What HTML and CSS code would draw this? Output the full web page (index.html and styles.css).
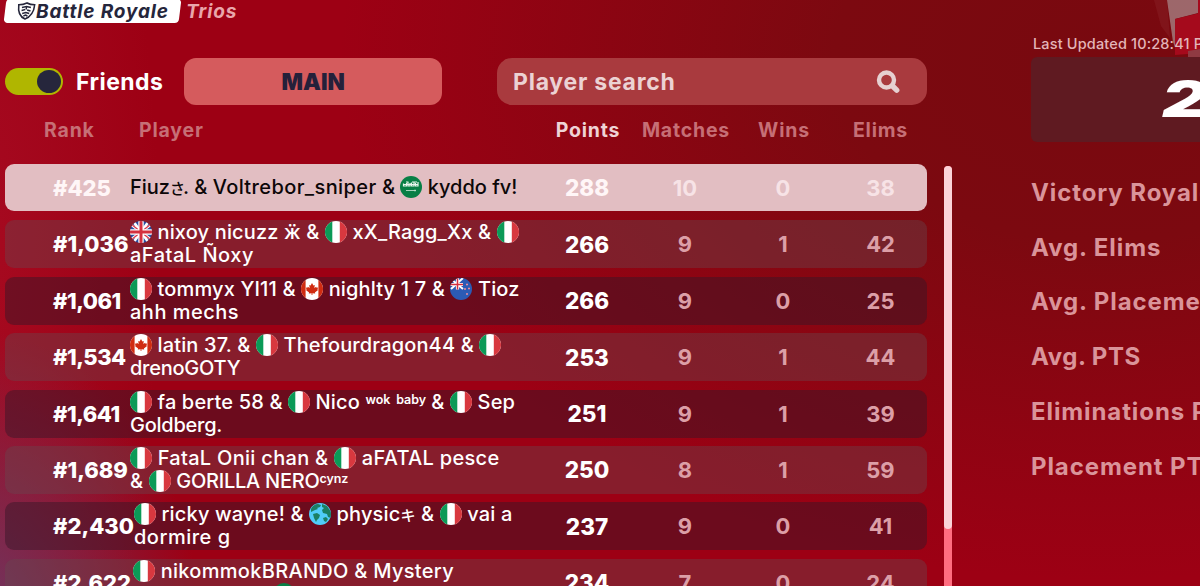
FILE: index.html
```
<!DOCTYPE html>
<html lang="en">
<head>
    <meta charset="UTF-8">
    <meta name="viewport" content="width=device-width, initial-scale=1.0">
    <title>Leaderboard</title>
    <link rel="stylesheet" href="styles.css">
</head>
<body>
    <!-- Flag shapes used in the player names -->
    <svg class="defs" width="0" height="0">
        <clipPath id="round"><circle cx="11" cy="11" r="11"/></clipPath>
        <symbol id="it" viewBox="0 0 22 22">
            <g clip-path="url(#round)">
                <rect width="22" height="22" fill="#fff"/>
                <rect width="7.3" height="22" fill="#0b9a57"/>
                <rect x="14.8" width="7.2" height="22" fill="#d8383f"/>
            </g>
        </symbol>
        <symbol id="gb" viewBox="0 0 22 22">
            <g clip-path="url(#round)">
                <rect width="22" height="22" fill="#2a4fa0"/>
                <path d="M0 3L22 19M22 3L0 19M3 0L19 22M19 0L3 22" stroke="#fff" stroke-width="2.6"/>
                <path d="M1 3L21 19M21 3L1 19" stroke="#d8384c" stroke-width="1.3"/>
                <path d="M11 0V22M0 11H22" stroke="#fff" stroke-width="5.4"/>
                <path d="M11 0V22M0 11H22" stroke="#d4303f" stroke-width="3"/>
            </g>
        </symbol>
        <symbol id="ca" viewBox="0 0 22 22">
            <g clip-path="url(#round)">
                <rect width="22" height="22" fill="#fff"/>
                <rect width="4.6" height="22" fill="#d02c12"/>
                <rect x="17.4" width="4.6" height="22" fill="#d02c12"/>
                <path d="M11 5l1.4 2.6 1.4-.7-.5 3.2 1.9-1.4.4 1 1.6-.2-.8 2 .7.6-3.2 2.4.3 1.1-2.8-.4V17h-.8v-1.8l-2.8.4.3-1.1-3.2-2.4.7-.6-.8-2 1.6.2.4-1 1.9 1.4-.5-3.2 1.4.7z" fill="#d02c12"/>
            </g>
        </symbol>
        <symbol id="sa" viewBox="0 0 22 22">
            <g clip-path="url(#round)">
                <rect width="22" height="22" fill="#087f45"/>
                <path d="M3.5 7.5v2.5h3V7M8 6v4h2V7M11.5 6.5V10h2.5V6M15.5 7v3h2.5V6M4 8.5h14M6 6h2.5M12 6h5" stroke="#e8f5ec" stroke-width="1.2" fill="none"/>
                <path d="M6 14.5h10M15 13.5v2" stroke="#cfe8d8" stroke-width=".8"/>
            </g>
        </symbol>
        <symbol id="nz" viewBox="0 0 22 22">
            <g clip-path="url(#round)">
                <rect width="22" height="22" fill="#2b5bb5"/>
                <path d="M1 1L13 11M13 0L1 11" stroke="#fff" stroke-width="2"/>
                <path d="M7.5 0V11.5M0 6.5H13" stroke="#fff" stroke-width="3.2"/>
                <path d="M7.5 0V11.5M0 6.5H13" stroke="#d4303f" stroke-width="1.5"/>
                <path d="M16 6.5h2M17 5.5v2M14 11h2M15 10v2M18 10.5h2M19 9.5v2M16 16h2M17 15v2" stroke="#e88ca0" stroke-width="1"/>
            </g>
        </symbol>
        <symbol id="globe" viewBox="0 0 22 22">
            <g clip-path="url(#round)">
                <rect width="22" height="22" fill="#50cdf8"/>
                <path d="M2 6c1-3 4-5 7-5l3 1-1 2-3 1 1 1-3 1-2 1-2 1zM13 1l5 2 4 6v6l-3-1-1-3-4-1-1-3 2-2-2-1zM4 11l4-1 3 2-1 3-2 2-1 2-2-4zM14 15l3-1 2 2-2 3-2-1z" fill="#1b7f63"/>
            </g>
        </symbol>
    </svg>

    <svg class="backdrop" viewBox="0 0 80 60">
        <path d="M34 0h13l3 38-9-12z" fill="#a04045" opacity=".2"/>
        <path d="M47 0h31v13l-23 6 2 33-4-10z" fill="#a9878a" opacity=".75"/>
        <path d="M55 19l25-6v40l-25 2z" fill="#a50a1c"/>
        <path d="M78 0h2v14l-2 1z" fill="#a50a1c"/>
        <path d="M68 51l12-2v9H68z" fill="#8f3a42"/>
    </svg>

    <div class="page">
        <div class="board">
            <div class="mode">
                <div class="mode-badge">
                    <svg class="shield" viewBox="0 0 18 18" fill="none" stroke="#25263b">
                        <path d="M9 1c2.5 1.3 5 1.8 8 1.8C17 9 15.5 14.5 9 17 2.5 14.5 1 9 1 2.8 4 2.8 6.5 2.3 9 1z" stroke-width="1.6"/>
                        <path d="M4.5 5.5L9 4.5l4.5 1M4.5 8.5L8 7.5M10 8l3.5 1M5.5 11.5L9 10.5l3.5 1M9 4.5v3M7 14l2-1 2 1" stroke-width="1.4"/>
                    </svg>
                    <span>Battle Royale</span>
                </div>
                <span class="mode-sub">Trios</span>
            </div>

            <div class="controls">
                <div class="toggle"><div class="knob"></div></div>
                <span class="friends">Friends</span>
                <button class="main-button">MAIN</button>
                <div class="search">
                    <span>Player search</span>
                    <svg class="search-icon" viewBox="0 0 24 24" fill="none" stroke="#e6d0d1">
                        <circle cx="10.5" cy="10" r="7.5" stroke-width="4.4"/>
                        <path d="M16.5 16l4.2 4.2" stroke-width="5.4" stroke-linecap="round"/>
                    </svg>
                </div>
            </div>

            <div class="head">
                <span class="head-rank">Rank</span>
                <span class="head-player">Player</span>
                <span class="stat head-points">Points</span>
                <span class="stat">Matches</span>
                <span class="stat">Wins</span>
                <span class="stat last">Elims</span>
            </div>

            <div class="rows">
                <div class="row active">
                    <span class="rank">#425</span>
                    <div class="player">Fiuz<small class="kana tight">さ</small>. &amp; <span class="loose">Voltrebor_sniper</span> &amp; <svg class="flag"><use href="#sa"/></svg> kyddo fv!</div>
                    <span class="stat points">288</span><span class="stat">10</span><span class="stat">0</span><span class="stat last">38</span>
                </div>
                <div class="row">
                    <span class="rank">#1,036</span>
                    <div class="player"><svg class="flag"><use href="#gb"/></svg> nixoy nicuzz ӝ &amp; <svg class="flag"><use href="#it"/></svg> xX_Ragg_Xx &amp; <svg class="flag"><use href="#it"/></svg><br><span class="loose">aFataL Ñoxy</span></div>
                    <span class="stat points">266</span><span class="stat">9</span><span class="stat">1</span><span class="stat last">42</span>
                </div>
                <div class="row dark">
                    <span class="rank narrow">#1,061</span>
                    <div class="player"><svg class="flag"><use href="#it"/></svg> tommyx YI11 &amp; <svg class="flag"><use href="#ca"/></svg> nighlty 1 7 &amp; <svg class="flag"><use href="#nz"/></svg> Tioz<br><span class="loose">ahh mechs</span></div>
                    <span class="stat points">266</span><span class="stat">9</span><span class="stat">0</span><span class="stat last">25</span>
                </div>
                <div class="row">
                    <span class="rank narrow">#1,534</span>
                    <div class="player"><svg class="flag"><use href="#ca"/></svg> latin 37. &amp; <svg class="flag"><use href="#it"/></svg> Thefourdragon44 &amp; <svg class="flag"><use href="#it"/></svg><br><span class="tight">drenoGOTY</span></div>
                    <span class="stat points">253</span><span class="stat">9</span><span class="stat">1</span><span class="stat last">44</span>
                </div>
                <div class="row dark">
                    <span class="rank narrow">#1,641</span>
                    <div class="player"><svg class="flag"><use href="#it"/></svg> fa berte 58 &amp; <svg class="flag"><use href="#it"/></svg> Nico <small class="sup">wok&nbsp; baby</small> &amp; <svg class="flag"><use href="#it"/></svg> Sep<br><span class="tight">Goldberg.</span></div>
                    <span class="stat points">251</span><span class="stat">9</span><span class="stat">1</span><span class="stat last">39</span>
                </div>
                <div class="row">
                    <span class="rank">#1,689</span>
                    <div class="player"><span class="medium"><svg class="flag"><use href="#it"/></svg> FataL Onii chan &amp; <svg class="flag"><use href="#it"/></svg> aFATAL pesce</span><br>&amp; <svg class="flag"><use href="#it"/></svg> <span class="tight">GORILLA NERO</span><small class="sup">cynz</small></div>
                    <span class="stat points">250</span><span class="stat">8</span><span class="stat">1</span><span class="stat last">59</span>
                </div>
                <div class="row dark">
                    <span class="rank wide">#2,430</span>
                    <div class="player"><svg class="flag"><use href="#it"/></svg> ricky wayne! &amp; <svg class="flag"><use href="#globe"/></svg> physic<small class="kana">キ</small> &amp; <svg class="flag"><use href="#it"/></svg> vai a<br><span class="loose">dormire g</span></div>
                    <span class="stat points">237</span><span class="stat">9</span><span class="stat">0</span><span class="stat last">41</span>
                </div>
                <div class="row">
                    <span class="rank mid">#2,622</span>
                    <div class="player"><span class="medium"><svg class="flag"><use href="#it"/></svg> nikommokBRANDO &amp; Mystery</span><br><svg class="flag next"><use href="#sa"/></svg></div>
                    <span class="stat points">234</span><span class="stat">7</span><span class="stat">0</span><span class="stat last">24</span>
                </div>
            </div>
        </div>

        <div class="scrollbar"><div class="thumb"></div></div>

        <div class="side">
            <div class="updated">Last Updated 10:28:41 PM</div>
            <div class="total"><span>2</span></div>
            <div class="side-list">
                <div>Victory Royale</div>
                <div>Avg. Elims</div>
                <div>Avg. Placement</div>
                <div class="pts">Avg. PTS</div>
                <div>Eliminations PTS</div>
                <div>Placement PTS</div>
            </div>
        </div>
    </div>
</body>
</html>
```
FILE: styles.css
```
body {
    margin: 0;
    width: 1200px;
    height: 586px;
    overflow: hidden;
    position: relative;
    font-family: Inter, "Noto Sans CJK JP", sans-serif;
    color: white;
    background:
        radial-gradient(ellipse 230px 300px at -30px 630px, #6b3a66 0%, rgba(107, 58, 102, 0) 100%),
        radial-gradient(ellipse 180px 600px at -20px 250px, rgba(175, 20, 45, 0.5) 0%, rgba(175, 20, 45, 0) 100%),
        radial-gradient(ellipse 760px 520px at 1100px 60px, #78090f 0%, #7c0910 35%, rgba(155, 0, 18, 0) 100%),
        #9d0014;
}
.defs {
    display: block;
}
.backdrop {
    position: absolute;
    top: 0;
    right: 0;
    width: 80px;
    height: 60px;
}
.page {
    position: relative;
    display: flex;
    width: 1200px;
    height: 586px;
    overflow: hidden;
}
.board {
    width: 922px;
    margin-left: 5px;
    flex-shrink: 0;
}
.mode {
    display: flex;
    height: 23px;
    font-size: 19px;
    font-style: italic;
    font-weight: 700;
    line-height: 23px;
    letter-spacing: 0.85px;
}
.mode-badge {
    display: flex;
    width: 175px;
    height: 24px;
    margin-top: -1px;
    border-radius: 4px;
    background-color: white;
    color: #25263b;
    transform: skewX(-7deg);
}
.mode-badge span {
    transform: skewX(7deg);
    line-height: 25px;
    white-space: nowrap;
}
.shield {
    width: 18px;
    height: 18px;
    margin: 3px 1px 0 12px;
    flex-shrink: 0;
}
.mode-sub {
    margin-left: 6px;
    color: #e9a6ab;
}
.controls {
    display: flex;
    align-items: center;
    height: 47px;
    margin-top: 35px;
    font-size: 23px;
    font-weight: 700;
}
.toggle {
    box-sizing: border-box;
    width: 58px;
    height: 27px;
    padding: 2px;
    border-radius: 14px;
    background-color: #b0b600;
}
.knob {
    width: 24px;
    height: 23px;
    margin-left: 30px;
    border-radius: 50%;
    background-color: #26263c;
}
.friends {
    width: 109px;
    margin-left: 13px;
    letter-spacing: 0.45px;
}
.main-button {
    width: 259px;
    height: 47px;
    padding: 0;
    border: none;
    border-radius: 12px;
    background-color: #d55b5d;
    color: #25203a;
    font-family: inherit;
    font-size: 22.5px;
    font-weight: 900;
}
.search {
    display: flex;
    align-items: center;
    justify-content: space-between;
    box-sizing: border-box;
    width: 430px;
    height: 47px;
    flex-shrink: 0;
    margin-left: 55px;
    padding: 0 27px 0 16px;
    border-radius: 15px;
    background-color: #a93a3e;
    color: #ecd2d3;
    letter-spacing: 0.75px;
}
.search-icon {
    width: 24px;
    height: 24px;
}
.head {
    display: flex;
    height: 51px;
    line-height: 51px;
    font-size: 19.5px;
    font-weight: 700;
    letter-spacing: 0.8px;
    color: #c66f76;
}
.head-rank {
    width: 95px;
    margin-left: 39px;
}
.head-player {
    flex: 1;
}
.stat {
    width: 98px;
    flex-shrink: 0;
    text-align: center;
}
.stat.last {
    width: 95px;
    text-indent: 2px;
}
.head .stat {
    text-indent: 2px;
}
.head-points {
    color: #efd3d5;
}
.rows {
    display: flex;
    flex-direction: column;
    gap: 8.4px;
    margin-top: 8px;
}
.row {
    display: flex;
    align-items: center;
    height: 48px;
    flex-shrink: 0;
    border-radius: 9px;
    background-color: rgba(103, 73, 80, 0.4);
    font-size: 22px;
    font-weight: 700;
}
.row .stat {
    color: #dc9fa7;
}
.row .stat.points {
    color: white;
    font-size: 22.5px;
    font-weight: 800;
}
.dark {
    background-color: rgba(55, 22, 40, 0.48);
}
.active {
    height: 47px;
    margin-bottom: 1px;
    background-color: #e2bec2;
}
.row.active .stat {
    color: #f7e3e6;
}
.row.active .points, .row.active .rank {
    color: #fff6f7;
}
.rank {
    width: 77px;
    flex-shrink: 0;
    margin-left: 48px;
    font-weight: 800;
    white-space: nowrap;
}
.narrow {
    letter-spacing: -0.5px;
}
.wide {
    width: 81px;
}
.mid {
    width: 80px;
}
.player {
    flex: 1;
    font-size: 20px;
    font-weight: 500;
    line-height: 23px;
    letter-spacing: 0.15px;
    white-space: nowrap;
}
.active .player {
    color: #0c0708;
    letter-spacing: 0;
}
.loose {
    letter-spacing: 0.5px;
}
.active .loose {
    letter-spacing: 0.4px;
}
.medium {
    letter-spacing: 0.3px;
}
.tight {
    letter-spacing: -0.25px;
}
.flag {
    width: 22px;
    height: 22px;
    margin: -4px 0;
}
.next {
    margin-left: 140px;
}
.kana {
    font-size: 15px;
    line-height: 1;
}
.kana.tight {
    letter-spacing: -2px;
}
.sup {
    font-size: 12.5px;
    font-weight: 600;
    line-height: 1;
    position: relative;
    top: -5px;
    letter-spacing: -0.1px;
}
.scrollbar {
    width: 8px;
    height: 440px;
    margin: 166px 0 0 17px;
    border-radius: 4px;
    background-color: #ff6d80;
    flex-shrink: 0;
}
.thumb {
    height: 363px;
    border-radius: 4px;
    background-color: #fbd3d8;
}
.side {
    width: 169px;
    flex-shrink: 0;
    margin: 34px 0 0 79px;
    overflow: hidden;
    white-space: nowrap;
}
.updated {
    height: 23px;
    padding-left: 2px;
    line-height: 20px;
    font-size: 14.5px;
    font-weight: 500;
    letter-spacing: 0.15px;
    color: #e3b5b8;
}
.total {
    box-sizing: border-box;
    height: 85px;
    padding-left: 131px;
    border-radius: 6px 0 0 6px;
    background-color: #5f1a21;
    font-size: 49px;
    font-style: italic;
    font-weight: 900;
    line-height: 85px;
}
.total span {
    display: inline-block;
    transform: scaleX(1.4);
    transform-origin: left;
}
.side-list {
    margin-top: 24px;
    font-size: 24px;
    font-weight: 700;
    line-height: 54.7px;
    letter-spacing: 0.9px;
    color: #da949a;
}
.pts {
    letter-spacing: 0.5px;
}
```
